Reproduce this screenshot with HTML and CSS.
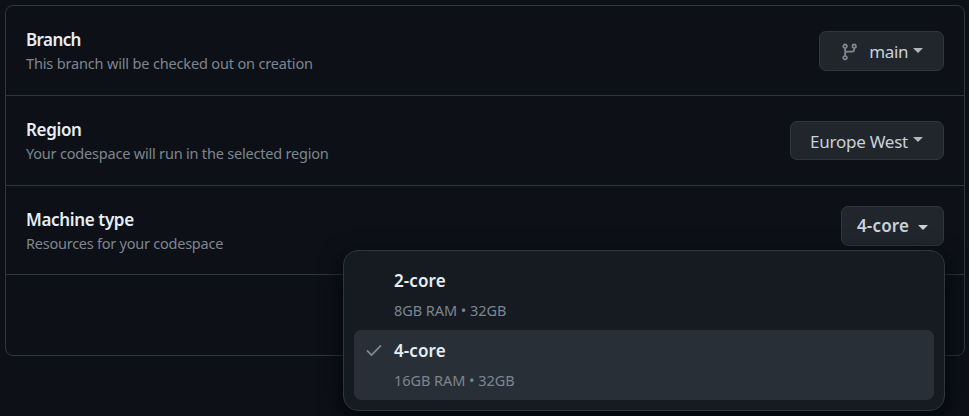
FILE: index.html
```html
<!DOCTYPE html>
<html lang="en">
<head>
<meta charset="utf-8">
<title>Create codespace</title>
<link rel="stylesheet" href="styles.css">
</head>
<body>
<main class="card">
  <section class="row">
    <div><h2 class="title t-branch">Branch</h2><p class="desc">This branch will be checked out on creation</p></div>
    <button class="btn btn-branch"><svg class="branch-icon" viewBox="0 0 16 16" width="20" height="20"><path d="M9.5 3.25a2.25 2.25 0 1 1 3 2.122V6A2.5 2.5 0 0 1 10 8.5H6a1 1 0 0 0-1 1v1.128a2.251 2.251 0 1 1-1.5 0V5.372a2.25 2.25 0 1 1 1.5 0v1.836A2.493 2.493 0 0 1 6 7h4a1 1 0 0 0 1-1v-.628A2.25 2.25 0 0 1 9.5 3.25Zm-6 0a.75.75 0 1 0 1.5 0 .75.75 0 0 0-1.5 0Zm8.25-.75a.75.75 0 1 0 0 1.5.75.75 0 0 0 0-1.5ZM4.25 12a.75.75 0 1 0 0 1.5.75.75 0 0 0 0-1.5Z"/></svg><span class="b-main">main</span><i class="caret"></i></button>
  </section>
  <section class="row">
    <div><h2 class="title t-region">Region</h2><p class="desc d-region">Your codespace will run in the selected region</p></div>
    <button class="btn btn-region"><span class="b-region">Europe West</span><i class="caret"></i></button>
  </section>
  <section class="row row-machine">
    <div><h2 class="title t-machine">Machine type</h2><p class="desc d-machine">Resources for your codespace</p></div>
    <button class="btn btn-machine"><span>4-core</span><i class="caret"></i></button>
    <div class="menu">
      <div class="item"><div class="name">2-core</div><div class="spec">8GB RAM • 32GB</div></div>
      <div class="item selected"><svg class="check" viewBox="0 0 16 16" width="20" height="20"><path d="M13.78 4.22a.75.75 0 0 1 0 1.06l-7.25 7.25a.75.75 0 0 1-1.06 0L2.22 9.28a.751.751 0 0 1 .018-1.042.751.751 0 0 1 1.042-.018L6 10.94l6.72-6.72a.75.75 0 0 1 1.06 0Z"/></svg><div class="name">4-core</div><div class="spec">16GB RAM • 32GB</div></div>
    </div>
  </section>
</main>
</body>
</html>
```
FILE: styles.css
```css
* { box-sizing: border-box; }
body {
  margin: 0;
  padding: 5px 4px 0 5px;
  height: 416px;
  overflow: hidden;
  background: #0d1117;
  color: #e6edf3;
  font-family: "Noto Sans", "Open Sans", sans-serif;
}
.card {
  height: 351px;
  border: 1px solid #30363d;
  border-radius: 8px;
}
.row {
  position: relative;
  display: flex;
  justify-content: space-between;
  align-items: flex-start;
  height: 90px;
  padding: 21px 20px 0;
  border-bottom: 1px solid #30363d;
}
.row-machine { height: 89px; }
.title { margin: 0; font-size: 17px; line-height: 25px; font-weight: 600; letter-spacing: -0.6px; white-space: nowrap; }
.t-region, .t-machine { letter-spacing: -0.35px; }
.desc { margin: 0; font-size: 14.5px; line-height: 23px; color: #7d8590; letter-spacing: -0.16px; white-space: nowrap; }
.d-region { letter-spacing: -0.2px; }
.d-machine { letter-spacing: -0.24px; }
.btn {
  display: flex;
  align-items: center;
  height: 40px;
  margin-top: 4px;
  padding: 0 20px;
  border: 1px solid #30363d;
  border-radius: 7px;
  background: #21262d;
  color: #c9d1d9;
  font: 400 17px/24px "Noto Sans", "Open Sans", sans-serif;
  letter-spacing: -0.4px;
  white-space: nowrap;
}
.btn-branch { width: 125px; }
.btn-region { width: 154px; height: 39px; padding-left: 19px; letter-spacing: -0.25px; }
.btn-machine { width: 103px; margin-top: -1px; padding: 0 14px 0 15px; font-weight: 600; letter-spacing: 0.15px; }
.btn-machine { justify-content: flex-start; }
.b-main, .b-region { position: relative; top: 1px; }
.branch-icon { margin: 2px 10px 0 0; fill: #7d8590; }
.caret {
  margin: -2px 0 0 5px;
  border: 5px solid transparent;
  border-top-color: #b1b6be;
  border-bottom: 0;
}
.btn-machine .caret { margin: 2px 0 0 9px; border-top-color: #c9d1d9; }
.menu {
  position: absolute;
  z-index: 1;
  top: 64px;
  right: 19px;
  width: 602px;
  height: 161px;
  padding: 9px 10px;
  border: 1px solid #30363d;
  border-radius: 15px;
  background: #161b22;
  box-shadow: 0 8px 24px #010409;
}
.item { position: relative; height: 70px; padding: 8px 0 0 40px; border-radius: 7px; }
.selected { background: #292f36; }
.name { font-size: 17px; line-height: 25px; font-weight: 600; letter-spacing: 0.1px; }
.spec { margin-top: 6px; font-size: 14.5px; line-height: 22px; color: #7d8590; letter-spacing: -0.05px; }
.check { position: absolute; left: 10px; top: 10px; fill: #7d8590; }
```
